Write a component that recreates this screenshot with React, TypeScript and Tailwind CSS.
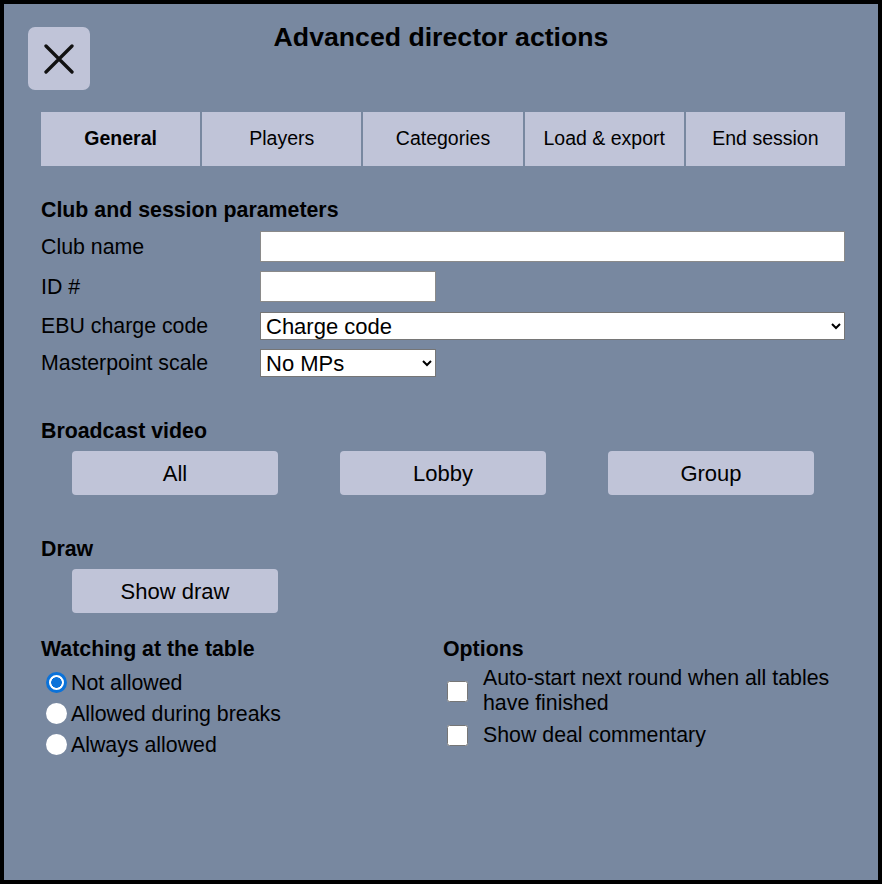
import { useState } from "react";

const tabs = ["General", "Players", "Categories", "Load & export", "End session"];

const radios = ["Not allowed", "Allowed during breaks", "Always allowed"];

function CloseIcon() {
  return (
    <svg width="30" height="30" viewBox="0 0 30 30" fill="none">
      <path d="M2 2L28 28M28 2L2 28" stroke="#111" strokeWidth="3.3" strokeLinecap="round" />
    </svg>
  );
}

function Heading({ children, className = "" }: { children: React.ReactNode; className?: string }) {
  return <div className={`text-[21.33px] leading-[24px] font-bold ${className}`}>{children}</div>;
}

function WideButton({ label }: { label: string }) {
  return (
    <button className="w-[206px] h-[44px] rounded-[4px] bg-[#c0c4d8] text-[22px] text-black">
      {label}
    </button>
  );
}

export default function App() {
  const [tab, setTab] = useState(0);
  const [watching, setWatching] = useState(0);
  const [autoStart, setAutoStart] = useState(false);
  const [commentary, setCommentary] = useState(false);

  return (
    <div className="w-[882px] h-[884px] border-4 border-black bg-[#7888a0] text-black font-[family-name:Liberation_Sans,Arial,sans-serif]">
      {/* Header */}
      <div className="grid grid-cols-[1fr_auto_1fr] items-start pt-[18px]">
        <button className="ml-[24px] mt-[5px] w-[62px] h-[63px] rounded-[7px] bg-[#c0c4d8] flex items-center justify-center">
          <CloseIcon />
        </button>
        <div className="text-[26.67px] leading-[30px] font-bold">Advanced director actions</div>
        <div />
      </div>

      <div className="pl-[37px] pr-[33px]">
        {/* Tabs */}
        <div className="mt-[22px] grid grid-cols-5 gap-[2px]">
          {tabs.map((t, i) => (
            <button
              key={t}
              onClick={() => setTab(i)}
              className={`h-[54px] bg-[#c0c4d8] text-[19.5px] ${tab === i ? "font-bold" : ""}`}
            >
              {t}
            </button>
          ))}
        </div>

        {/* Club and session parameters */}
        <Heading className="mt-[32px]">Club and session parameters</Heading>
        <div className="mt-[9px] grid grid-cols-[219px_1fr] gap-y-[9px] items-center text-[21.33px] leading-[24px]">
          <div>Club name</div>
          <input className="h-[31px] w-full bg-white border border-[#8a8a8a]" />
          <div>ID #</div>
          <input className="h-[31px] w-[176px] bg-white border border-[#8a8a8a]" />
          <div className="mt-px">EBU charge code</div>
          <select className="mt-px h-[28px] w-full bg-white border border-[#767676] text-[22px] leading-[24px] pl-[1px]">
            <option>Charge code</option>
          </select>
          <div>Masterpoint scale</div>
          <select className="h-[28px] w-[176px] bg-white border border-[#767676] text-[22px] leading-[24px] pl-[1px]">
            <option>No MPs</option>
          </select>
        </div>

        {/* Broadcast video */}
        <Heading className="mt-[42px]">Broadcast video</Heading>
        <div className="mt-[8px] flex justify-around">
          <WideButton label="All" />
          <WideButton label="Lobby" />
          <WideButton label="Group" />
        </div>

        {/* Draw */}
        <Heading className="mt-[42px]">Draw</Heading>
        <div className="mt-[8px] pl-[31px]">
          <WideButton label="Show draw" />
        </div>

        {/* Watching + Options */}
        <div className="mt-[24px] grid grid-cols-2 text-[21.33px]">
          <div>
            <Heading>Watching at the table</Heading>
            <div className="mt-[7px] flex flex-col">
              {radios.map((r, i) => (
                <label key={r} className="h-[31px] flex items-center">
                  <input
                    type="radio"
                    name="watching"
                    checked={watching === i}
                    onChange={() => setWatching(i)}
                    className="appearance-none ml-[5px] mr-[4px] mb-[3px] w-[21px] h-[21px] shrink-0 rounded-full bg-white checked:border-[3px] checked:border-[#0b72d9] checked:bg-[radial-gradient(circle,#0b72d9_0,#0b72d9_5px,#fff_5.6px)]"
                  />
                  <span>{r}</span>
                </label>
              ))}
            </div>
          </div>
          <div>
            <Heading>Options</Heading>
            <div className="mt-[5px] flex flex-col gap-[7px] leading-[25px]">
              <label className="flex items-center">
                <input
                  type="checkbox"
                  checked={autoStart}
                  onChange={() => setAutoStart(!autoStart)}
                  className="ml-[4px] mr-[15px] w-[21px] h-[21px] shrink-0"
                />
                <span>Auto-start next round when all tables have finished</span>
              </label>
              <label className="flex items-center">
                <input
                  type="checkbox"
                  checked={commentary}
                  onChange={() => setCommentary(!commentary)}
                  className="ml-[4px] mr-[15px] w-[21px] h-[21px] shrink-0"
                />
                <span>Show deal commentary</span>
              </label>
            </div>
          </div>
        </div>
      </div>
    </div>
  );
}
